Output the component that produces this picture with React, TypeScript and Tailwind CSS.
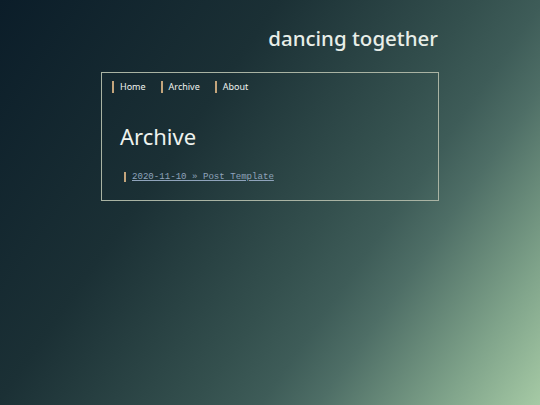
export default function App() {
  return (
    <div
      className="w-[540px] h-[405px] overflow-hidden bg-[linear-gradient(125deg,#0b1d29_0%,#1b3035_34%,#34504e_58%,#3e5c58_66%,#4e6e66_73%,#7fa38a_88%,#a6caa5_100%)]"
      style={{ fontFamily: '"Noto Sans", "Open Sans", sans-serif' }}
    >
      <div className="ml-[101px] w-[338px] pt-[23px]">
        <h1 className="text-right pr-[1px] text-[20.5px] leading-[30px] font-medium text-[#e8eee8]">
          dancing together
        </h1>
        <div className="mt-[19px] h-[129px] border border-[#a9b3a3] px-[10px] pt-[8px]">
          <nav className="flex items-center gap-[15px] text-[9px] leading-[12px] text-[#eef2ee]">
            <span className="border-l-2 border-[#c4a57c] pl-[6px]">Home</span>
            <span className="border-l-2 border-[#c4a57c] pl-[6px]">Archive</span>
            <span className="border-l-2 border-[#c4a57c] pl-[6px]">About</span>
          </nav>
          <h2 className="mt-[28px] pl-[8px] text-[22px] leading-[30px] text-[#eef2ee]">Archive</h2>
          <div className="mt-[20px] pl-[12px] flex items-center">
            <span className="border-l-2 border-[#c4a57c] pl-[6px] h-[10px]" />
            <a
              className="text-[9.1px] leading-[12px] text-[#8fa3bb] underline"
              style={{ fontFamily: '"Liberation Mono", monospace' }}
            >
              2020-11-10 » Post Template
            </a>
          </div>
        </div>
      </div>
    </div>
  );
}
